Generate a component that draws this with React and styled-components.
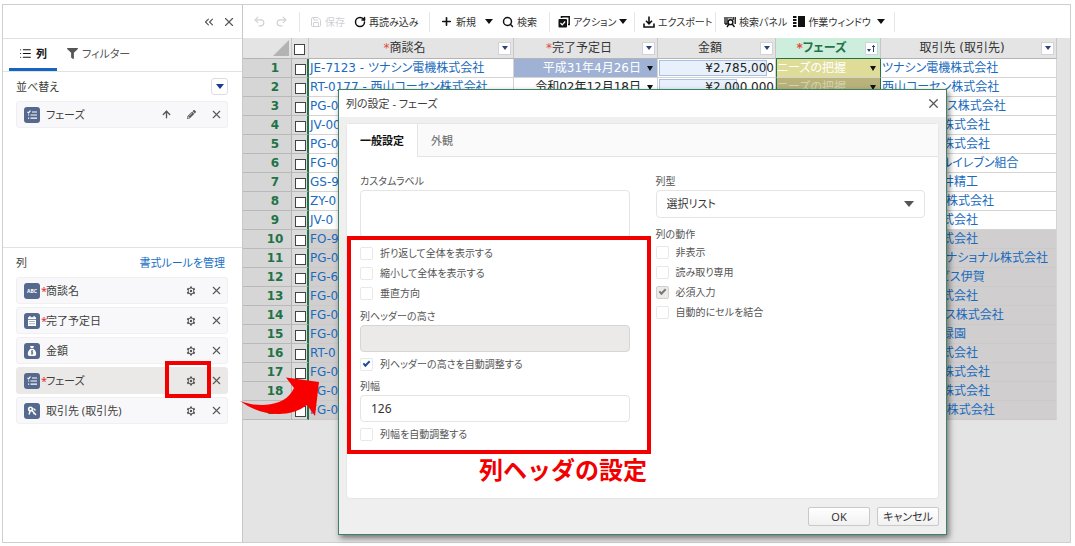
import React from 'react';
import styled, { createGlobalStyle } from 'styled-components';
import {
  ArrowUp,
  ChevronsLeft,
  List,
  Plus,
  Redo2,
  RotateCw,
  Save,
  Search,
  Undo2,
  X,
} from 'lucide-react';
import { FaFilter, FaPencilAlt } from 'react-icons/fa';

const GlobalStyle = createGlobalStyle`
  *, *::before, *::after {
    box-sizing: border-box;
  }
  body {
    margin: 0;
    background: #fff;
    color: #3e3e3c;
    font-family: 'Noto Sans', 'Noto Sans CJK JP', sans-serif;
    font-size: 11px;
    line-height: 16px;
    font-feature-settings: 'palt';
  }
  button, input, textarea, select {
    margin: 0;
    padding: 0;
    color: inherit;
    font: inherit;
    font-feature-settings: inherit;
  }
  button {
    border: 0;
    background: none;
    white-space: nowrap;
  }
  svg {
    display: block;
    flex: none;
  }
`;

const Frame = styled.div`
  position: relative;
  display: flex;
  min-height: calc(100vh - 7px);
  margin: 4px 4px 3px 2px;
  border: 1px solid #cfcfcf;
`;

/* ---------- sidebar ---------- */

const Sidebar = styled.aside`
  flex: 0 0 240px;
  background: #fff;
  border-right: 1px solid #c8c8c8;
`;

const SidebarTop = styled.div`
  display: flex;
  align-items: center;
  justify-content: flex-end;
  gap: 8px;
  height: 34px;
  padding-right: 8px;
  border-bottom: 1px solid #e2e2e2;
`;

const IconButton = styled.button`
  display: grid;
  place-items: center;
  width: 12px;
  height: 16px;
  color: #5a5856;
`;

const SideTabs = styled.div`
  display: flex;
  height: 33px;
  padding-left: 6px;
  border-bottom: 1px solid #e2e2e2;
`;

const SideTab = styled.button`
  display: flex;
  align-items: center;
  gap: 4px;
  padding: 0 10px;
  color: ${(props) => (props.$active ? '#111' : '#555')};
  font-weight: ${(props) => (props.$active ? 700 : 400)};
  border-bottom: 3px solid ${(props) => (props.$active ? '#1565c0' : 'transparent')};
`;

const Section = styled.section`
  padding: 6px 14px 0 13px;
  min-height: ${(props) => (props.$tall ? '176px' : '0')};
  border-bottom: ${(props) => (props.$tall ? '1px solid #e2e2e2' : '0')};
`;

const SectionHead = styled.div`
  display: flex;
  align-items: center;
  justify-content: space-between;
  height: 17px;
  margin-bottom: 6px;
`;

const ManageLink = styled.a`
  margin-right: 3px;
  color: #1a70c4;
  text-decoration: none;
`;

const DropButton = styled.button`
  display: grid;
  place-items: center;
  width: 17px;
  height: 17px;
  background: #fff;
  border: 1px solid #dadde4;
  border-radius: 3px;
  color: #1b3a93;
`;

const CardList = styled.ul`
  display: grid;
  gap: 3px;
  margin: 0;
  padding: 0;
  list-style: none;
`;

const Card = styled.li`
  display: flex;
  align-items: center;
  height: 27px;
  padding: 0 5px 0 7px;
  background: ${(props) => (props.$selected ? '#ebe9e8' : '#f8f8fa')};
  border: 1px solid ${(props) => (props.$selected ? '#ebe9e8' : '#f0f0f4')};
  border-radius: 3px;
`;

const Badge = styled.span`
  display: grid;
  place-items: center;
  width: 16px;
  height: 16px;
  background: #54698d;
  border-radius: 3px;
`;

const Star = styled.span`
  width: 6px;
  padding-left: 1px;
  color: #d33;
`;

const CardName = styled.span`
  flex: 1;
  white-space: nowrap;
`;

const CardActions = styled.span`
  display: flex;
  gap: 13px;
`;

/* ---------- toolbar ---------- */

const Main = styled.main`
  flex: 1;
  min-width: 0;
  overflow: hidden;
  background: #e4e4e4;
`;

const Toolbar = styled.div`
  display: flex;
  align-items: center;
  height: 33px;
  background: #fff;
`;

const ToolGroup = styled.div`
  display: flex;
  align-items: center;
  gap: ${(props) => (props.$tight ? 6 : 9)}px;
  width: ${(props) => props.$width}px;
  height: 20px;
  padding-left: ${(props) => (props.$tight ? 8 : 10)}px;
  border-right: 1px solid #e6e6e6;
  font-size: 10px;
`;

const Tool = styled.button`
  display: flex;
  align-items: center;
  gap: 3px;
  color: ${(props) => (props.disabled ? '#cfcfd6' : '#333')};

  svg {
    color: ${(props) => (props.disabled ? '#cfcfd6' : '#111')};
  }
`;

/* ---------- grid ---------- */

const Grid = styled.table`
  width: 814px;
  table-layout: fixed;
  border-collapse: separate;
  border-spacing: 0;
  font-family: 'DejaVu Sans', 'Noto Sans CJK JP', sans-serif;
  font-size: 12px;
`;

const HeadCell = styled.th`
  height: 21px;
  padding: 0 2px;
  background: ${(props) => (props.$active ? '#cdeedd' : '#e4e4e4')};
  border-right: 1px solid #c6c6c6;
  border-bottom: 1px solid ${(props) => (props.$active ? '#217346' : '#b4b4b4')};
  color: ${(props) => (props.$active ? '#217346' : '#333')};
  font-weight: ${(props) => (props.$active ? 700 : 400)};
`;

const HeadInner = styled.div`
  display: flex;
  align-items: center;

  span {
    flex: 1;
  }
  i {
    color: #e2483d;
    font-style: normal;
  }
`;

const FilterButton = styled.button`
  display: grid;
  place-items: center;
  width: 13px;
  height: 13px;
  background: #fff;
  border: 1px solid #d2d2d8;
  color: #2f4377;
`;

const Corner = styled.div`
  width: 16px;
  height: 16px;
  margin-left: auto;
  background: #b3b3b3;
  clip-path: polygon(100% 0, 100% 100%, 0 100%);
`;

const RowNumber = styled.th`
  height: 19px;
  padding: 0 0 0 16px;
  background: #d6d6d6;
  border-right: 1px solid #b4b4b4;
  border-bottom: 1px solid #b9b9b9;
  color: #217346;
  font-weight: 700;
  line-height: 18px;
`;

const CheckCell = styled.td`
  padding: 0 0 0 3px;
  background: #dcdcdc;
  border-right: 2px solid #217346;
  border-bottom: 1px solid #b9b9b9;
`;

const RowCheck = styled.input`
  display: block;
  width: 11px;
  height: 11px;
  margin: 3px 0 0;
  appearance: none;
  background: #fff;
  border: 1px solid #444;
`;

const Cell = styled.td`
  height: 19px;
  padding: 0 1px;
  overflow: hidden;
  background: ${(props) => (props.$muted ? '#d0cece' : '#fff')};
  border-right: 1px solid #d4d4d4;
  border-bottom: 1px solid ${(props) => (props.$muted ? '#cbc9c9' : '#d4d4d4')};
  line-height: 18px;
  white-space: nowrap;

  a {
    color: #1a6bbd;
    text-decoration: none;
  }
`;

const DateCell = styled(Cell)`
  padding-right: 4px;
  background: ${(props) => (props.$selected ? '#9fb1d4' : props.$muted ? '#d0cece' : '#fff')};
  color: ${(props) => (props.$selected ? '#fff' : '#222')};
`;

const PhaseCell = styled(Cell)`
  padding: 0 4px 0 0;
  background: ${(props) => props.$fill};
  border-left: 1px solid #217346;
  border-right: 1px solid #217346;
  color: ${(props) => props.$ink};
`;

const Spread = styled.div`
  display: flex;
  align-items: center;
  justify-content: ${(props) => (props.$end ? 'flex-end' : 'space-between')};
  gap: 6px;
  color: inherit;

  svg {
    color: #111;
  }
`;

const AmountBox = styled.div`
  position: relative;
  height: 18px;
  text-align: right;
  color: #222;
`;

const AmountBar = styled.div`
  position: absolute;
  top: 1px;
  left: 0;
  height: 16px;
  background: #e8f0fb;
  border: 1px solid #a9bfe4;
`;

const AmountText = styled.span`
  position: relative;
`;

/* ---------- dialog ---------- */

const Dialog = styled.div`
  position: absolute;
  top: 84px;
  left: 335px;
  right: 123px;
  background: #efefef;
  border: 1px solid #3c8264;
  box-shadow: 2px 3px 6px rgba(0, 0, 0, 0.5);
`;

const DialogHead = styled.div`
  display: flex;
  align-items: center;
  justify-content: space-between;
  height: 27px;
  padding: 0 8px 0 7px;
  background: #fff;
`;

const DialogTitle = styled.h2`
  margin: 0;
  font-size: 11px;
  font-weight: 400;
`;

const Panel = styled.div`
  min-height: 376px;
  margin: 6px 7px 0;
  background: #fff;
  border: 1px solid #e6e6e6;
  border-radius: 4px;
`;

const Tabs = styled.div`
  display: flex;
  height: 33px;
  background: #fafafa;
  border-bottom: 1px solid #e4e4e4;
`;

const Tab = styled.button`
  height: 33px;
  padding: 0 13px;
  background: ${(props) => (props.$active ? '#fff' : 'transparent')};
  border-right: 1px solid ${(props) => (props.$active ? '#e4e4e4' : 'transparent')};
  color: ${(props) => (props.$active ? '#111' : '#666')};
  font-weight: ${(props) => (props.$active ? 700 : 400)};
`;

const Form = styled.div`
  display: grid;
  grid-template-columns: 1fr 1fr;
  gap: 26px;
  padding: 16px 13px 0;
  font-size: 10px;
  color: #555;
`;

const Group = styled.div`
  display: flex;
  flex-direction: column;
  margin: 0 0 ${(props) => props.$gap || 0}px;
`;

const Label = styled.label`
  height: 16px;
  margin-bottom: 1px;
`;

const TextBox = styled.input`
  width: 100%;
  height: 27px;
  padding: 0 10px;
  background: #fff;
  border: 1px solid #e4e4e4;
  border-radius: 4px;
  color: #333;
  font-size: 12px;

  &:disabled {
    background: #ebeae9;
    border-color: #d8d6d5;
  }
`;

const TextArea = styled.textarea`
  display: block;
  width: 100%;
  height: 48px;
  padding: 6px 10px;
  border: 1px solid #e4e4e4;
  border-radius: 4px;
  resize: none;
`;

const SelectWrap = styled.div`
  position: relative;
  color: #555;

  svg {
    position: absolute;
    top: 11px;
    right: 11px;
    pointer-events: none;
  }
`;

const Select = styled.select`
  display: block;
  width: 100%;
  height: 28px;
  padding: 0 10px;
  appearance: none;
  background: #fff;
  border: 1px solid #e4e4e4;
  border-radius: 4px;
  color: #333;
  font-size: 11px;
`;

const CheckRow = styled.label`
  display: flex;
  align-items: center;
  gap: 7px;
  height: 20px;
`;

const CheckBox = styled.input`
  display: grid;
  place-items: center;
  width: 13px;
  height: 13px;
  appearance: none;
  background: #fff;
  border: 1px solid #e8e8e8;
  border-radius: 2px;
  color: #1b4f9c;

  &:disabled {
    background: #ebeae9;
    border-color: #d0cfce;
    color: #777;
  }
  &:checked::after {
    content: '';
    width: 7px;
    height: 4px;
    margin-bottom: 2px;
    border-left: 2px solid currentColor;
    border-bottom: 2px solid currentColor;
    transform: rotate(-45deg);
  }
`;

const Footer = styled.div`
  display: flex;
  justify-content: flex-end;
  gap: 7px;
  padding: 8px 7px;
`;

const FooterButton = styled.button`
  width: 62px;
  height: 19px;
  background: linear-gradient(#fff, #f1f1f1);
  border: 1px solid #c9c9c9;
  border-radius: 2px;
  color: #333;
  line-height: 16px;
`;

/* ---------- annotations ---------- */

const Marker = styled.div`
  position: absolute;
  top: ${(props) => props.$top}px;
  left: ${(props) => props.$left}px;
  width: ${(props) => props.$width}px;
  height: ${(props) => props.$height}px;
  border: 4px solid #f20000;
  pointer-events: none;
`;

const Arrow = styled.svg`
  position: absolute;
  top: 370px;
  left: 236px;
`;

const Note = styled.p`
  position: absolute;
  top: 449px;
  left: 476px;
  margin: 0;
  color: #f20000;
  font-size: 24px;
  font-weight: 700;
  line-height: 32px;
  font-feature-settings: normal;
`;

const Caret = ({ w = 8, h = 5 }) => (
  <svg width={w} height={h} viewBox="0 0 8 5" preserveAspectRatio="none">
    <path d="M0 0h8L4 5z" fill="currentColor" />
  </svg>
);

const Gear = () => (
  <svg width="10" height="10" viewBox="0 0 20 20" fill="currentColor" fillRule="evenodd">
    <path d="M8.2 1h3.6l.5 2.6 1.7 1 2.6-.9 1.8 3.1-2 1.8v2.8l2 1.8-1.8 3.1-2.6-.9-1.7 1-.5 2.6H8.2l-.5-2.6-1.7-1-2.6.9-1.8-3.1 2-1.8V8.6l-2-1.8 1.8-3.1 2.6.9 1.7-1zM10 5.2a4.800 4.800 0 1 0 0 9.600 4.800 4.800 0 0 0 0-9.600zM10 7.600a2.400 2.400 0 1 1 0 4.800 2.400 2.400 0 0 1 0-4.800z" />
  </svg>
);

const ActionIcon = () => (
  <svg width="12" height="12" viewBox="0 0 12 12">
    <path d="M3.500 2V.8h7.700v7.700H10" fill="none" stroke="#111" strokeWidth="1.500" />
    <rect x="0.500" y="3" width="8.500" height="8.500" rx="1" fill="#111" />
    <path d="M2.500 7l1.700 1.800L7.200 5.500" fill="none" stroke="#fff" strokeWidth="1.200" />
  </svg>
);

const ExportIcon = () => (
  <svg width="12" height="12" viewBox="0 0 12 12" fill="none" stroke="#111" strokeWidth="1.600">
    <path d="M6 .5v7M3 4.800l3 3 3-3M1 7.500V11h10V7.500" />
  </svg>
);

const SearchPanelIcon = () => (
  <svg width="12" height="12" viewBox="0 0 12 12" fill="none" stroke="#111">
    <path d="M1 1v7M3 1v7M11.200 1v7M9.200 1v3M5 1v1.500M7 1v1.500" strokeWidth="1.300" />
    <circle cx="6.500" cy="6.200" r="2.400" strokeWidth="1.400" />
    <path d="M1 8h2.500M5 8l-2 3M8.200 8l2.300 3" strokeWidth="1.400" />
  </svg>
);

const WindowIcon = () => (
  <svg width="12" height="11" viewBox="0 0 12 11" fill="#111">
    <path d="M5 0h7v11H5zM0 0h3.500v2H0zM0 3h3.500v2H0zM0 6h3.500v2H0zM0 9h3.500v2H0z" />
  </svg>
);

const badges = {
  text: (
    <svg width="14" height="10" viewBox="0 0 14 10">
      <text x="7" y="7" textAnchor="middle" fontSize="5" fontWeight="700" fill="#fff">
        ABC
      </text>
    </svg>
  ),
  date: (
    <svg width="10" height="10" viewBox="0 0 10 10">
      <path d="M1 1.200h1.300V0h1.200v1.200h3V0h1.200v1.200H9V3H1zM1 3.700h8V10H1z" fill="#fff" />
      <path d="M2.500 5.500h5M2.500 7.700h5" stroke="#54698d" strokeDasharray="1 1" />
    </svg>
  ),
  money: (
    <svg width="10" height="10" viewBox="0 0 10 10">
      <path d="M3 0h4L6.200 2H3.800zM3.500 2.700h3C8.500 4.300 9.200 6 9.200 8c0 1.300-.7 2-2 2H2.800c-1.300 0-2-.7-2-2 0-2 .7-3.700 2.700-5.300z" fill="#fff" />
      <path d="M6.200 4.900H4.700v1.400h1v1.600H4M5 4v4.800" fill="none" stroke="#54698d" strokeWidth=".8" />
    </svg>
  ),
  picklist: (
    <svg width="10" height="10" viewBox="0 0 10 10" fill="none" stroke="#fff">
      <path d="M.5 1.800l1 1L3.500.6M5 2h5M3.500 5H10M3.500 8.200H10M1 5h1.200M1 8.200h1.200" strokeWidth="1.200" />
    </svg>
  ),
  lookup: (
    <svg width="10" height="10" viewBox="0 0 10 10" fill="none" stroke="#fff">
      <circle cx="3.500" cy="3" r="1.800" strokeWidth="1.600" />
      <path d="M3.200 5L2 8.500M4.800 4.200L9 9M6.500 2.500l2 2M6.500 8l1.300-1.300" strokeWidth="1.400" />
    </svg>
  ),
};

const columns = [
  { name: '商談名', badge: 'text', required: true },
  { name: '完了予定日', badge: 'date', required: true },
  { name: '金額', badge: 'money' },
  { name: 'フェーズ', badge: 'picklist', required: true, selected: true },
  { name: '取引先 (取引先)', badge: 'lookup' },
];

const rows = [
  {
    name: 'JE-7123 - ツナシン電機株式会社',
    date: '平成31年4月26日',
    amount: '¥2,785,000',
    bar: 108,
    phase: 'ニーズの把握',
    account: 'ツナシン電機株式会社',
  },
  {
    name: 'RT-0177 - 西山コーセン株式会社',
    date: '令和02年12月18日',
    amount: '¥2,000,000',
    bar: 78,
    phase: 'ニーズの把握',
    account: '西山コーセン株式会社',
  },
  { name: 'PG-0', account: 'アサヒノハウス株式会社' },
  { name: 'JV-00', account: '大和電機工株式会社' },
  { name: 'PG-0', account: '中央電設工株式会社' },
  { name: 'FG-0', account: '東京中央アルイレブン組合' },
  { name: 'GS-9', account: '有限会社今井精工' },
  { name: 'ZY-0', account: 'ミカミデンシ株式会社' },
  { name: 'JV-0', account: '東北製菓株式会社' },
  { name: 'FO-9', account: '関東物産株式会社' },
  { name: 'PG-0', account: 'ヒノインターナショナル株式会社' },
  { name: 'FG-6', account: 'ホテルサービス伊賀' },
  { name: 'FG-0', account: '北海製紙株式会社' },
  { name: 'FG-0', account: 'ヤマトノハウス株式会社' },
  { name: 'FG-0', account: '医療法人会緑園' },
  { name: 'RT-0', account: '山陽製鋼株式会社' },
  { name: 'FG-0', account: '四国海運業株式会社' },
  { name: 'FG-0', account: '九州陸運業株式会社' },
  { name: 'FG-0', account: 'オリエンタル株式会社' },
];

const phaseFill = (index) => {
  if (index === 0) return '#dfdc98';
  if (index === 1) return '#b9b27b';
  return '#fff';
};

const ColumnCard = ({ name, badge, required, selected, sort }) => (
  <Card $selected={selected}>
    <Badge>{badges[badge]}</Badge>
    <Star>{required ? '*' : ''}</Star>
    <CardName>{name}</CardName>
    <CardActions>
      {sort ? (
        <>
          <IconButton aria-label="昇順">
            <ArrowUp size={11} strokeWidth={3} />
          </IconButton>
          <IconButton aria-label="編集">
            <FaPencilAlt size={9} />
          </IconButton>
        </>
      ) : (
        <IconButton aria-label="設定">
          <Gear />
        </IconButton>
      )}
      <IconButton aria-label="削除">
        <X size={13} strokeWidth={2} />
      </IconButton>
    </CardActions>
  </Card>
);

const GridHead = ({ title, required, active }) => (
  <HeadCell $active={active}>
    <HeadInner>
      <span>
        {required && <i>*</i>}
        {title}
      </span>
      <FilterButton aria-label="絞り込み">
        {active ? (
          <svg width="9" height="9" viewBox="0 0 9 9">
            <path d="M0 5h4L2 8z" fill="#2f4377" />
            <path d="M6.500 8V1.500M5 3l1.500-1.500L8 3" fill="none" stroke="#2f4377" />
          </svg>
        ) : (
          <Caret w={6} h={4} />
        )}
      </FilterButton>
    </HeadInner>
  </HeadCell>
);

const Check = ({ label, ...rest }) => (
  <CheckRow>
    <CheckBox type="checkbox" {...rest} />
    {label}
  </CheckRow>
);

const ToolbarArea = () => (
  <Toolbar>
    <ToolGroup $width={57}>
      <Tool disabled aria-label="元に戻す">
        <Undo2 size={13} />
      </Tool>
      <Tool disabled aria-label="やり直し">
        <Redo2 size={13} />
      </Tool>
    </ToolGroup>
    <ToolGroup $width={130}>
      <Tool disabled>
        <Save size={12} />
        保存
      </Tool>
      <Tool>
        <RotateCw size={12} strokeWidth={3} />
        再読み込み
      </Tool>
    </ToolGroup>
    <ToolGroup $width={120}>
      <Tool>
        <Plus size={13} strokeWidth={3} />
        新規
      </Tool>
      <Tool aria-label="新規メニュー">
        <Caret />
      </Tool>
      <Tool>
        <Search size={12} strokeWidth={3} />
        検索
      </Tool>
    </ToolGroup>
    <ToolGroup $width={85} $tight>
      <Tool>
        <ActionIcon />
        アクション
        <Caret />
      </Tool>
    </ToolGroup>
    <ToolGroup $width={81} $tight>
      <Tool>
        <ExportIcon />
        エクスポート
      </Tool>
    </ToolGroup>
    <ToolGroup $width={179} $tight>
      <Tool>
        <SearchPanelIcon />
        検索パネル
      </Tool>
      <Tool>
        <WindowIcon />
        作業ウィンドウ
      </Tool>
      <Tool aria-label="作業ウィンドウメニュー">
        <Caret />
      </Tool>
    </ToolGroup>
  </Toolbar>
);

const DataGrid = () => (
  <Grid>
    <colgroup>
      <col width="49" />
      <col width="17" />
      <col width="205" />
      <col width="144" />
      <col width="118" />
      <col width="105" />
      <col width="176" />
    </colgroup>
    <thead>
      <tr>
        <HeadCell>
          <Corner />
        </HeadCell>
        <HeadCell>
          <RowCheck type="checkbox" aria-label="すべて選択" />
        </HeadCell>
        <GridHead title="商談名" required />
        <GridHead title="完了予定日" required />
        <GridHead title="金額" />
        <GridHead title="フェーズ" required active />
        <GridHead title="取引先 (取引先)" />
      </tr>
    </thead>
    <tbody>
      {rows.map((row, index) => {
        const muted = index > 8;
        return (
          <tr key={index}>
            <RowNumber>{index + 1}</RowNumber>
            <CheckCell>
              <RowCheck type="checkbox" aria-label={`${index + 1}行目`} />
            </CheckCell>
            <Cell $muted={muted}>
              <a href="#record">{row.name}</a>
            </Cell>
            <DateCell $muted={muted} $selected={index === 0}>
              {row.date && (
                <Spread $end>
                  {row.date}
                  <Caret w={6} />
                </Spread>
              )}
            </DateCell>
            <Cell $muted={muted}>
              {row.amount && (
                <AmountBox>
                  <AmountBar style={{ width: row.bar }} />
                  <AmountText>{row.amount}</AmountText>
                </AmountBox>
              )}
            </Cell>
            <PhaseCell $fill={phaseFill(index)} $ink={index === 0 ? '#fff' : '#d8d3ab'}>
              {row.phase && (
                <Spread>
                  {row.phase}
                  <Caret w={6} />
                </Spread>
              )}
            </PhaseCell>
            <Cell $muted={muted}>
              <a href="#account">{row.account}</a>
            </Cell>
          </tr>
        );
      })}
    </tbody>
  </Grid>
);

const SettingsDialog = () => (
  <Dialog role="dialog" aria-labelledby="dialog-title">
    <DialogHead>
      <DialogTitle id="dialog-title">列の設定 - フェーズ</DialogTitle>
      <IconButton aria-label="閉じる">
        <X size={15} strokeWidth={2} />
      </IconButton>
    </DialogHead>
    <Panel>
      <Tabs>
        <Tab $active>一般設定</Tab>
        <Tab>外観</Tab>
      </Tabs>
      <Form>
        <div>
          <Group $gap={5}>
            <Label htmlFor="custom-label">カスタムラベル</Label>
            <TextArea id="custom-label" />
          </Group>
          <Group $gap={5}>
            <Check label="折り返して全体を表示する" />
            <Check label="縮小して全体を表示する" />
            <Check label="垂直方向" />
          </Group>
          <Group $gap={2}>
            <Label htmlFor="header-height">列ヘッダーの高さ</Label>
            <TextBox id="header-height" disabled />
          </Group>
          <Group $gap={4}>
            <Check label="列ヘッダーの高さを自動調整する" defaultChecked />
          </Group>
          <Group $gap={2}>
            <Label htmlFor="column-width">列幅</Label>
            <TextBox id="column-width" defaultValue="126" />
          </Group>
          <Check label="列幅を自動調整する" />
        </div>
        <div>
          <Group $gap={8}>
            <Label htmlFor="column-type">列型</Label>
            <SelectWrap>
              <Select id="column-type">
                <option>選択リスト</option>
              </Select>
              <Caret w={10} h={6} />
            </SelectWrap>
          </Group>
          <Group role="group" aria-label="列の動作">
            <span>列の動作</span>
            <Check label="非表示" />
            <Check label="読み取り専用" />
            <Check label="必須入力" defaultChecked disabled />
            <Check label="自動的にセルを結合" />
          </Group>
        </div>
      </Form>
    </Panel>
    <Footer>
      <FooterButton>OK</FooterButton>
      <FooterButton>キャンセル</FooterButton>
    </Footer>
  </Dialog>
);

const App = () => (
  <>
    <GlobalStyle />
    <Frame>
      <Sidebar>
        <SidebarTop>
          <IconButton aria-label="折りたたむ">
            <ChevronsLeft size={14} strokeWidth={2} />
          </IconButton>
          <IconButton aria-label="閉じる">
            <X size={14} strokeWidth={2} />
          </IconButton>
        </SidebarTop>
        <SideTabs>
          <SideTab $active>
            <List size={13} strokeWidth={2} />列
          </SideTab>
          <SideTab>
            <FaFilter size={11} />
            フィルター
          </SideTab>
        </SideTabs>
        <Section $tall>
          <SectionHead>
            並べ替え
            <DropButton aria-label="並べ替えを追加">
              <Caret />
            </DropButton>
          </SectionHead>
          <CardList>
            <ColumnCard name="フェーズ" badge="picklist" sort />
          </CardList>
        </Section>
        <Section>
          <SectionHead>
            列<ManageLink href="#rules">書式ルールを管理</ManageLink>
          </SectionHead>
          <CardList>
            {columns.map((column) => (
              <ColumnCard key={column.name} {...column} />
            ))}
          </CardList>
        </Section>
      </Sidebar>
      <Main>
        <ToolbarArea />
        <DataGrid />
      </Main>
      <SettingsDialog />
      <Marker $top={356} $left={162} $width={46} $height={37} />
      <Marker $top={231} $left={344} $width={304} $height={218} />
      <Arrow width="86" height="44" viewBox="239 375 86 44">
        <path
          d="M240 401C258 408 286 407 294 388L286 377.500 319 382 315 416 307 405C290 418 262 417 240 401z"
          fill="#f90000"
        />
      </Arrow>
      <Note>列ヘッダの設定</Note>
    </Frame>
  </>
);

export default App;
